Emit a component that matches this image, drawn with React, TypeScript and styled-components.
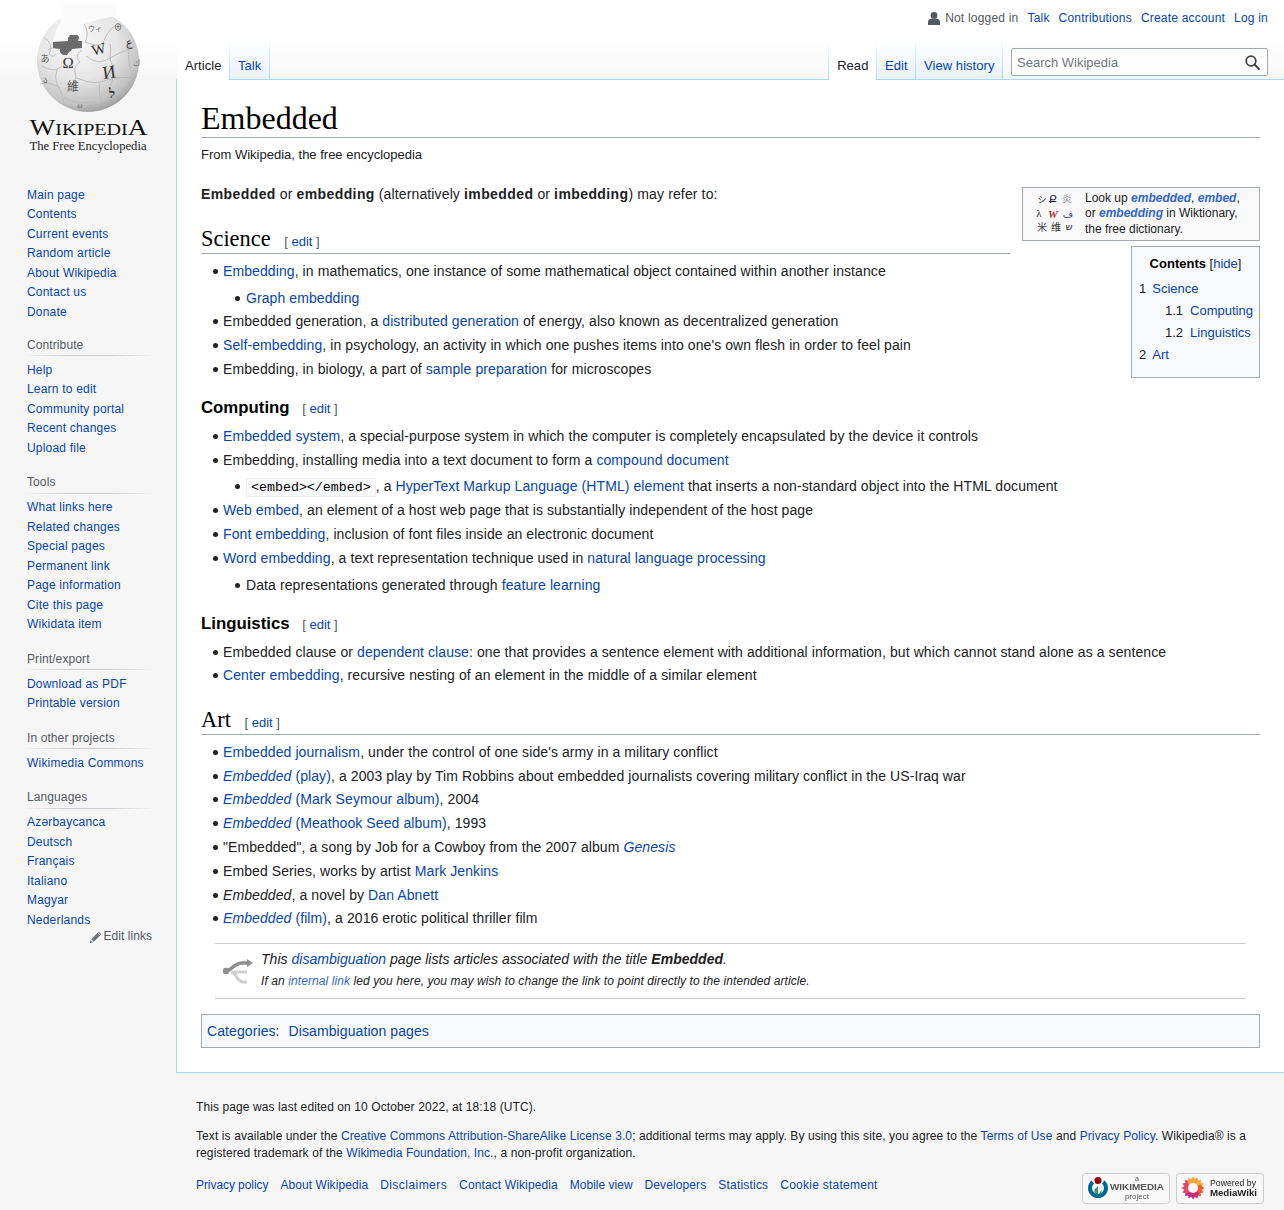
import React from "react";
import styled, { createGlobalStyle } from "styled-components";

const GlobalStyle = createGlobalStyle`
  html, body {
    margin: 0;
    padding: 0;
    font-family: "Liberation Sans", Arial, sans-serif;
    color: #202122;
    background: linear-gradient(#fff 50%, #f6f6f6 100%) 0 0 / 100% 80px no-repeat, #f6f6f6;
  }
  a {
    color: #0645ad;
    text-decoration: none;
  }
`;

const Page = styled.div`
  display: grid;
  grid-template-columns: 176px 1fr;
  width: 1284px;
`;

/* ---------- sidebar ---------- */

const Sidebar = styled.nav`
  display: flex;
  flex-direction: column;
  padding-bottom: 20px;
`;

const LogoBox = styled.a`
  display: block;
  width: 176px;
  height: 185.7px;
`;

const Portal = styled.div<{ $first?: boolean }>`
  margin: 0 24px 0 27px;
  padding-bottom: ${(p) => (p.$first ? "12.8px" : "14px")};
`;

const PortalHeading = styled.h3`
  margin: 0 -3px 4.5px -3px;
  padding: 4px 0 4px 3px;
  font-size: 12px;
  line-height: 13.5px;
  font-weight: 400;
  letter-spacing: 0.1px;
  color: #54595d;
  background: linear-gradient(to right, rgba(200, 204, 209, 0) 0, #c8ccd1 33%, #c8ccd1 66%, rgba(200, 204, 209, 0) 100%) left bottom / 100% 1px no-repeat;
`;

const PortalList = styled.ul`
  list-style: none;
  margin: 0;
  padding: 0;
`;

const PortalItem = styled.li`
  font-size: 12px;
  line-height: 13.5px;
  padding: 3px 0;
  letter-spacing: 0.2px;
  white-space: nowrap;
`;

const EditLinks = styled.div`
  display: flex;
  justify-content: flex-end;
  align-items: center;
  gap: 2px;
  margin: -14px 24px 0 0;
  font-size: 12px;
  line-height: 13.5px;
  letter-spacing: 0.05px;
  color: #54595d;
`;

/* ---------- header ---------- */

const Main = styled.div`
  min-width: 0;
`;

const Header = styled.header`
  height: 79px;
  display: flex;
  flex-direction: column;
`;

const PersonalBar = styled.div`
  height: 40px;
  display: flex;
  justify-content: flex-end;
  align-items: flex-start;
  gap: 9px;
  padding: 12px 16px 0 0;
  box-sizing: border-box;
  font-size: 12px;
  line-height: 13px;
  letter-spacing: 0.2px;
  color: #54595d;
`;

const PersonalName = styled.span`
  display: flex;
  align-items: center;
  gap: 5px;
`;

const TabRow = styled.div`
  flex: 1;
  display: flex;
  justify-content: space-between;
  align-items: stretch;
  padding-left: 1px;
`;

const TabGroup = styled.div`
  display: flex;
  align-items: stretch;
`;

const RightGroup = styled.div`
  display: flex;
  align-items: stretch;
  gap: 8px;
  padding-right: 16px;
`;

const Tab = styled.a<{ $active?: boolean; $leftEdge?: boolean }>`
  display: block;
  position: relative;
  height: ${(p) => (p.$active ? "40px" : "39px")};
  margin-bottom: ${(p) => (p.$active ? "-1px" : "0")};
  padding: 18px 7.5px 0 8px;
  box-sizing: border-box;
  font-size: 13px;
  line-height: 15px;
  letter-spacing: 0.05px;
  color: ${(p) => (p.$active ? "#202122" : "#0645ad")};
  background: ${(p) => (p.$active ? "#fff" : "linear-gradient(to bottom, #fff 0, #e8f2f8 100%)")};
  border-right: 1px solid transparent;
  border-left: ${(p) => (p.$leftEdge ? "1px solid transparent" : "0")};
  border-image: linear-gradient(to bottom, rgba(167, 215, 249, 0) 0, #a7d7f9 100%) 1;
`;

const SearchBox = styled.div`
  width: 257px;
  height: 28px;
  margin-top: 8px;
  box-sizing: border-box;
  display: flex;
  align-items: center;
  justify-content: space-between;
  padding: 0 7px 0 5px;
  border: 1px solid #a2a9b1;
  border-radius: 2px;
  background: rgba(255, 255, 255, 0.7);
  font-size: 13px;
  color: #72777d;
`;

/* ---------- article ---------- */

const Content = styled.main`
  border-top: 1px solid #a7d7f9;
  border-left: 1px solid #a7d7f9;
  border-bottom: 1px solid #a7d7f9;
  background: #fff;
  height: 994px;
  box-sizing: border-box;
  padding: 20px 24px 0 24px;
  font-size: 14px;
  line-height: 22.4px;
`;

const Title = styled.h1`
  margin: 0 0 5.5px;
  font-family: "Liberation Serif", Georgia, serif;
  font-weight: 400;
  font-size: 32px;
  line-height: 37.4px;
  color: #000;
  border-bottom: 1px solid #a2a9b1;
`;

const SiteSub = styled.div`
  font-size: 13px;
  line-height: 22.4px;
  margin-bottom: 17px;
`;

const Para = styled.p`
  margin: 0;
  letter-spacing: 0.13px;

  b {
    letter-spacing: 0.4px;
  }
`;

const WiktBox = styled.div`
  float: right;
  clear: right;
  display: flex;
  align-items: center;
  gap: 8px;
  width: 238px;
  height: 54px;
  box-sizing: border-box;
  margin: 3.7px 0 5px 12px;
  padding: 0 4px 0 12px;
  border: 1px solid #a2a9b1;
  background: #f9f9f9;
  font-size: 12px;
  line-height: 15.3px;

  a {
    color: #36c;
    font-weight: 700;
    font-style: italic;
  }
`;

const WiktLine = styled.div`
  white-space: nowrap;
`;

const Toc = styled.div`
  float: right;
  clear: right;
  width: 129px;
  height: 132px;
  box-sizing: border-box;
  margin: 0 0 8px 12px;
  padding: 7px;
  border: 1px solid #a2a9b1;
  background: #f8f9fa;
  font-size: 13px;
  line-height: 19.5px;
`;

const TocTitle = styled.div`
  text-align: center;
  font-size: 13px;
  margin-bottom: 5px;

  b {
    font-size: 13px;
    color: #000;
  }
`;

const TocRow = styled.div<{ $sub?: boolean }>`
  display: flex;
  gap: ${(p) => (p.$sub ? "7px" : "6px")};
  margin: 0 0 2.8px ${(p) => (p.$sub ? "26px" : "0")};
  white-space: nowrap;
`;

const H2 = styled.h2`
  overflow: hidden;
  margin: 19.6px 0 0;
  font-family: "Liberation Serif", Georgia, serif;
  font-weight: 400;
  font-size: 22.4px;
  line-height: 28px;
  color: #000;
  border-bottom: 1px solid #a2a9b1;
`;

const H3 = styled.h3`
  margin: 15.6px 0 0;
  font-size: 16.8px;
  line-height: 23.5px;
  font-weight: 700;
  color: #000;
`;

const EditSection = styled.span`
  margin-left: 8px;
  font-family: "Liberation Sans", Arial, sans-serif;
  font-size: 13px;
  line-height: 1;
  font-weight: 400;
  color: #54595d;
`;

const Item = styled.li<{ $nested?: boolean }>`
  position: relative;
  margin-bottom: 1.4px;

  &::before {
    content: "";
    position: absolute;
    left: ${(p) => (p.$nested ? "-11px" : "-10px")};
    top: 9px;
    width: 5px;
    height: 5px;
    border-radius: 50%;
    background: #202122;
  }
`;

const List = styled.ul<{ $nested?: boolean }>`
  list-style: none;
  margin: ${(p) => (p.$nested ? "4.3px 0 0 23px" : "5.5px 0 0 22px")};
  padding: 0;
  letter-spacing: 0.09px;
`;

const Code = styled.code`
  font-family: "Liberation Mono", monospace;
  font-size: 13.3px;
  line-height: 1;
  letter-spacing: 0;
  color: #000;
  background: #f8f9fa;
  border: 1px solid #eaecf0;
  border-radius: 2px;
  padding: 1px 4px;
`;

const Disambig = styled.div`
  clear: both;
  display: flex;
  align-items: center;
  gap: 7px;
  margin: 13.2px 14px 0;
  height: 56px;
  box-sizing: border-box;
  padding: 0 7px;
  border-top: 1px solid #ccc;
  border-bottom: 1px solid #ccc;
  font-style: italic;
`;

const DisambigText = styled.div`
  line-height: 22px;
  letter-spacing: 0.03px;
`;

const DisambigSmall = styled.div`
  font-size: 12px;
  line-height: 23px;
  letter-spacing: 0.09px;

  a {
    color: #36c;
  }
`;

const Categories = styled.div`
  margin-top: 15px;
  padding: 5px;
  border: 1px solid #a2a9b1;
  background: #f8f9fa;
  height: 34px;
  box-sizing: border-box;
  display: flex;
  align-items: center;
  gap: 9px;
  letter-spacing: 0.09px;
`;

/* ---------- footer ---------- */

const Footer = styled.footer`
  padding: 26px 20px 0;
  font-size: 12px;
  line-height: 16.8px;
  color: #202122;
`;

const FooterBlock = styled.div`
  margin-bottom: 12.5px;
  letter-spacing: 0.1px;
`;

const FooterBottom = styled.div`
  display: flex;
  justify-content: space-between;
  align-items: flex-start;
  margin-top: -1px;
`;

const FooterLinks = styled.div`
  display: flex;
  gap: 12px;
  padding-top: 4px;
`;

const FooterLink = styled.a<{ $spacing: number }>`
  letter-spacing: ${(p) => p.$spacing}px;
`;

const Badges = styled.div`
  display: flex;
  gap: 6px;
`;

const Badge = styled.a`
  display: block;
  width: 88px;
  height: 31px;
`;

/* ---------- drawings ---------- */

const seams = [
  "M44 38c6 3 8 8 6 14-2 4 4 6 6 2",
  "M84 24c4 6 4 12 1 18 6 2 10 4 18 2 2-8 6-14 12-18",
  "M82 50c-6 4-6 8-2 12-6 4-6 8-4 14-2 6-2 12 0 18",
  "M86 56c8 6 14 8 24 2 8-4 14-8 24-10",
  "M110 44c2 8-2 14 2 20 4 8 2 14-2 22 0 6 0 10-2 16",
  "M42 66c8 4 14 6 20 0",
  "M76 78c8 2 14 6 24 4 8-2 18-6 32-4",
  "M58 68c-4 8-2 16 2 22 2 6 4 10 4 16",
  "M40 84c8-2 14 0 20 4",
  "M130 42c-2 12-2 20 2 32",
  "M62 54c-2-6-8-8-14-4",
  "M100 84c-2 8 0 14 4 22",
  "M64 98c8 4 18 6 30 4",
];

const GlobeLogo = () => (
  <svg width="176" height="177" viewBox="0 0 176 177">
    <defs>
      <radialGradient id="sphere" cx="40%" cy="30%" r="78%">
        <stop offset="0" stopColor="#f8f8f8" />
        <stop offset="0.5" stopColor="#e6e6e6" />
        <stop offset="0.8" stopColor="#c2c2c2" />
        <stop offset="1" stopColor="#8a8a8a" />
      </radialGradient>
    </defs>
    <circle cx="88" cy="61" r="51" fill="url(#sphere)" />
    <g fill="none" stroke="#b9b9b9" strokeWidth="0.9">
      {seams.map((d) => (
        <path key={d} d={d} />
      ))}
    </g>
    <path d="M63 4H116V16L100 19 84 24 82 36 53 42 56 30 61 22 60 18z" fill="#fbfbfb" />
    <path d="M53 42l15-1v-3l2-3h8l1 3-1 3h4v7l-10 1-1 2-2 1-2 3h-4l-3-3v-3l-7-1z" fill="#6b6b6b" />
    <g fontFamily="'Liberation Serif', 'Noto Sans CJK SC', serif" fill="#333" textAnchor="middle">
      <text x="68" y="68" fontSize="15">Ω</text>
      <text x="100" y="54" fontSize="15" transform="rotate(-14 100 54)">W</text>
      <text x="110" y="78" fontSize="18" transform="rotate(-8 110 78)">И</text>
      <text x="73" y="91" fontSize="12" fill="#555" fontFamily="'Noto Sans CJK TC', sans-serif">維</text>
      <text x="112" y="98" fontSize="13" fontWeight="700">ל</text>
      <text x="129" y="46" fontSize="11">ع</text>
      <text x="45" y="62" fontSize="9" fill="#555" fontFamily="'Noto Sans CJK JP', sans-serif">あ</text>
      <text x="45" y="83" fontSize="9" fill="#666">ა</text>
      <text x="136" y="66" fontSize="9" fill="#777">ك</text>
      <text x="118" y="30" fontSize="8" fill="#444">⊕</text>
      <text x="95" y="31" fontSize="7" fill="#555" fontFamily="'Noto Sans CJK JP', sans-serif">ウィ</text>
      <text x="80" y="108" fontSize="8" fill="#666">ω</text>
    </g>
    <g fontFamily="'Liberation Serif', serif" fill="#111" textAnchor="middle">
      <text x="88.5" y="135" fontSize="16.5" textLength="118" lengthAdjust="spacingAndGlyphs">
        <tspan fontSize="22.5">W</tspan>IKIPEDI<tspan fontSize="22.5">A</tspan>
      </text>
      <text x="88" y="150" fontSize="12.6" textLength="117" lengthAdjust="spacingAndGlyphs" fill="#222">
        The Free Encyclopedia
      </text>
    </g>
  </svg>
);

const UserGlyph = () => (
  <svg width="12" height="13" viewBox="0 0 12 13" fill="#54595d">
    <circle cx="6" cy="3.4" r="3.4" />
    <path d="M0 13V10c0-2 2-3.200 3.400-3.200h5.200C10 6.800 12 8 12 10v3z" />
  </svg>
);

const PencilGlyph = () => (
  <svg width="11" height="11" viewBox="0 0 11 11" fill="#72777d">
    <path d="M0 11l.6-3 2.400 2.400zM1.200 7.200L7.600.8l2.600 2.600-6.400 6.400zM8.200.2c.3-.3.8-.3 1.100 0l1.500 1.500c.3.3.3.8 0 1.100l-.1.100L8.100.4z" />
  </svg>
);

const LensGlyph = () => (
  <svg width="15" height="15" viewBox="0 0 15 15" fill="none" stroke="#404244" strokeWidth="1.800">
    <circle cx="6" cy="6" r="4.800" />
    <path d="M9.500 9.500l4.500 4.500" strokeLinecap="round" />
  </svg>
);

const WiktLogo = () => (
  <svg width="42" height="50" viewBox="0 -4 42 50" style={{ flexShrink: 0 }}>
    <g fontFamily="'Noto Sans CJK SC', 'Liberation Serif', serif" fontSize="10" fill="#223" textAnchor="middle">
      <text x="7" y="10" fontSize="9">シ</text>
      <text x="18" y="10" fontSize="11" fontFamily="'DejaVu Sans', sans-serif">Ք</text>
      <text x="32" y="10" fill="#889">炎</text>
      <text x="4" y="24" fontSize="11" fontFamily="'Liberation Serif', serif">λ</text>
      <text x="18" y="25" fontSize="11" fill="#a33" fontStyle="italic" fontWeight="700" fontFamily="'Liberation Serif', serif">W</text>
      <text x="33" y="24" fontSize="10" fill="#557" fontFamily="'DejaVu Sans', sans-serif">ف</text>
      <text x="7" y="38" fill="#445">米</text>
      <text x="21" y="38" fill="#333">维</text>
      <text x="34" y="37" fontSize="10" fontFamily="'DejaVu Sans', sans-serif">ש</text>
    </g>
  </svg>
);

const DisambigIcon = () => (
  <svg width="32" height="26" viewBox="0 0 32 26" style={{ flexShrink: 0 }}>
    <path d="M12 14H25M9 14C14 14 15 24 21 24H25" fill="none" stroke="#cfcfcf" strokeWidth="3" />
    <path d="M3 13C10 13 12 5 20 5H26" fill="none" stroke="#8f8f8f" strokeWidth="3.500" />
    <path d="M25 1l6 4-6 4z" fill="#8f8f8f" />
    <circle cx="4" cy="13" r="3.200" fill="#8f8f8f" />
  </svg>
);

const BadgeFrame = styled.svg`
  display: block;
  filter: blur(0.3px);
`;

const BadgeBack = () => <rect x="0.5" y="0.5" width="87" height="30" rx="3" fill="#f8f8f8" stroke="#c8ccd1" />;

const WikimediaBadge = () => (
  <BadgeFrame width="88" height="31" viewBox="0 0 88 31">
    <BadgeBack />
    <circle cx="16" cy="7.500" r="3.500" fill="#990000" />
    <path d="M9.500 7.500a10 10 0 1 0 13 0l-2.500 3a6 6 0 1 1-8 0z" fill="#006699" />
    <path d="M16 23v-10l-3.500 3.500v4a8 8 0 0 0 7 0v-4z" fill="#339966" />
    <g fontFamily="'Liberation Sans', sans-serif" textAnchor="middle" fill="#555">
      <text x="55" y="8" fontSize="7">a</text>
      <text x="55" y="17" fontSize="8.500" fontWeight="700" textLength="54" lengthAdjust="spacingAndGlyphs">WIKIMEDIA</text>
      <text x="55" y="25.500" fontSize="8">project</text>
    </g>
  </BadgeFrame>
);

const petals = Array.from({ length: 16 }, (_, i) => i * 22.5);

const petalColor = (angle: number) => {
  if (angle < 70 || angle >= 320) return "#f8a53c";
  if (angle < 140) return "#f0592b";
  if (angle < 230) return "#c42f7f";
  return "#e2476a";
};

const MediaWikiBadge = () => (
  <BadgeFrame width="88" height="31" viewBox="0 0 88 31">
    <BadgeBack />
    <g transform="translate(17 15)">
      {petals.map((a) => (
        <path key={a} d="M-3-7L0-11.500 3-7 2-4H-2z" fill={petalColor(a)} transform={`rotate(${a})`} />
      ))}
      <circle r="5" fill="#f8f8f8" />
    </g>
    <g fontFamily="'Liberation Sans', sans-serif" fill="#222">
      <text x="34" y="13" fontSize="9.500" textLength="46" lengthAdjust="spacingAndGlyphs">Powered by</text>
      <text x="34" y="23" fontSize="9.500" fontWeight="700" textLength="47" lengthAdjust="spacingAndGlyphs">MediaWiki</text>
    </g>
  </BadgeFrame>
);

/* ---------- data ---------- */

const portals = [
  { title: "Contribute", items: ["Help", "Learn to edit", "Community portal", "Recent changes", "Upload file"] },
  { title: "Tools", items: ["What links here", "Related changes", "Special pages", "Permanent link", "Page information", "Cite this page", "Wikidata item"] },
  { title: "Print/export", items: ["Download as PDF", "Printable version"] },
  { title: "In other projects", items: ["Wikimedia Commons"] },
  { title: "Languages", items: ["Azərbaycanca", "Deutsch", "Français", "Italiano", "Magyar", "Nederlands"] },
];

const mainLinks = ["Main page", "Contents", "Current events", "Random article", "About Wikipedia", "Contact us", "Donate"];

const footerLinks = [
  { label: "Privacy policy", spacing: -0.07 },
  { label: "About Wikipedia", spacing: 0.07 },
  { label: "Disclaimers", spacing: 0.45 },
  { label: "Contact Wikipedia", spacing: 0.12 },
  { label: "Mobile view", spacing: 0 },
  { label: "Developers", spacing: 0.1 },
  { label: "Statistics", spacing: 0.2 },
  { label: "Cookie statement", spacing: 0.25 },
];

const Edit = () => (
  <EditSection>
    [ <a href="#">edit</a> ]
  </EditSection>
);

export default function App() {
  return (
    <>
      <GlobalStyle />
      <Page>
        <Sidebar>
          <LogoBox href="#">
            <GlobeLogo />
          </LogoBox>
          <Portal $first>
            <PortalList>
              {mainLinks.map((l) => (
                <PortalItem key={l}>
                  <a href="#">{l}</a>
                </PortalItem>
              ))}
            </PortalList>
          </Portal>
          {portals.map((p) => (
            <Portal key={p.title}>
              <PortalHeading>{p.title}</PortalHeading>
              <PortalList>
                {p.items.map((l) => (
                  <PortalItem key={l}>
                    <a href="#">{l}</a>
                  </PortalItem>
                ))}
              </PortalList>
            </Portal>
          ))}
          <EditLinks>
            <PencilGlyph /> Edit links
          </EditLinks>
        </Sidebar>

        <Main>
          <Header>
            <PersonalBar>
              <PersonalName>
                <UserGlyph /> Not logged in
              </PersonalName>
              <a href="#">Talk</a>
              <a href="#">Contributions</a>
              <a href="#">Create account</a>
              <a href="#">Log in</a>
            </PersonalBar>
            <TabRow>
              <TabGroup>
                <Tab $active>Article</Tab>
                <Tab href="#">Talk</Tab>
              </TabGroup>
              <RightGroup>
                <TabGroup>
                  <Tab $active $leftEdge>Read</Tab>
                  <Tab href="#">Edit</Tab>
                  <Tab href="#">View history</Tab>
                </TabGroup>
                <SearchBox>
                  Search Wikipedia
                  <LensGlyph />
                </SearchBox>
              </RightGroup>
            </TabRow>
          </Header>

          <Content>
            <Title>Embedded</Title>
            <SiteSub>From Wikipedia, the free encyclopedia</SiteSub>
            <WiktBox>
              <WiktLogo />
              <div>
                <WiktLine>Look up <a href="#">embedded</a>, <a href="#">embed</a>,</WiktLine>
                <WiktLine>or <a href="#">embedding</a> in Wiktionary,</WiktLine>
                <WiktLine>the free dictionary.</WiktLine>
              </div>
            </WiktBox>
            <Para>
              <b>Embedded</b> or <b>embedding</b> (alternatively <b>imbedded</b> or <b>imbedding</b>) may refer to:
            </Para>
            <Toc>
              <TocTitle>
                <b>Contents</b> [<a href="#">hide</a>]
              </TocTitle>
              <TocRow>1 <a href="#">Science</a></TocRow>
              <TocRow $sub>1.1 <a href="#">Computing</a></TocRow>
              <TocRow $sub>1.2 <a href="#">Linguistics</a></TocRow>
              <TocRow>2 <a href="#">Art</a></TocRow>
            </Toc>
            <H2>Science <Edit /></H2>
            <List>
              <Item>
                <a href="#">Embedding</a>, in mathematics, one instance of some mathematical object contained within another instance
                <List $nested>
                  <Item $nested><a href="#">Graph embedding</a></Item>
                </List>
              </Item>
              <Item>Embedded generation, a <a href="#">distributed generation</a> of energy, also known as decentralized generation</Item>
              <Item><a href="#">Self-embedding</a>, in psychology, an activity in which one pushes items into one's own flesh in order to feel pain</Item>
              <Item>Embedding, in biology, a part of <a href="#">sample preparation</a> for microscopes</Item>
            </List>
            <H3>Computing <Edit /></H3>
            <List>
              <Item><a href="#">Embedded system</a>, a special-purpose system in which the computer is completely encapsulated by the device it controls</Item>
              <Item>
                Embedding, installing media into a text document to form a <a href="#">compound document</a>
                <List $nested>
                  <Item $nested><Code>&lt;embed&gt;&lt;/embed&gt;</Code>, a <a href="#">HyperText Markup Language (HTML) element</a> that inserts a non-standard object into the HTML document</Item>
                </List>
              </Item>
              <Item><a href="#">Web embed</a>, an element of a host web page that is substantially independent of the host page</Item>
              <Item><a href="#">Font embedding</a>, inclusion of font files inside an electronic document</Item>
              <Item>
                <a href="#">Word embedding</a>, a text representation technique used in <a href="#">natural language processing</a>
                <List $nested>
                  <Item $nested>Data representations generated through <a href="#">feature learning</a></Item>
                </List>
              </Item>
            </List>
            <H3>Linguistics <Edit /></H3>
            <List>
              <Item>Embedded clause or <a href="#">dependent clause</a>: one that provides a sentence element with additional information, but which cannot stand alone as a sentence</Item>
              <Item><a href="#">Center embedding</a>, recursive nesting of an element in the middle of a similar element</Item>
            </List>
            <H2>Art <Edit /></H2>
            <List>
              <Item><a href="#">Embedded journalism</a>, under the control of one side's army in a military conflict</Item>
              <Item><a href="#"><i>Embedded</i> (play)</a>, a 2003 play by Tim Robbins about embedded journalists covering military conflict in the US-Iraq war</Item>
              <Item><a href="#"><i>Embedded</i> (Mark Seymour album)</a>, 2004</Item>
              <Item><a href="#"><i>Embedded</i> (Meathook Seed album)</a>, 1993</Item>
              <Item>"Embedded", a song by Job for a Cowboy from the 2007 album <a href="#"><i>Genesis</i></a></Item>
              <Item>Embed Series, works by artist <a href="#">Mark Jenkins</a></Item>
              <Item><i>Embedded</i>, a novel by <a href="#">Dan Abnett</a></Item>
              <Item><a href="#"><i>Embedded</i> (film)</a>, a 2016 erotic political thriller film</Item>
            </List>
            <Disambig>
              <DisambigIcon />
              <div>
                <DisambigText>
                  This <a href="#">disambiguation</a> page lists articles associated with the title <b>Embedded</b>.
                </DisambigText>
                <DisambigSmall>
                  If an <a href="#">internal link</a> led you here, you may wish to change the link to point directly to the intended article.
                </DisambigSmall>
              </div>
            </Disambig>
            <Categories>
              <span><a href="#">Categories</a>:</span>
              <a href="#">Disambiguation pages</a>
            </Categories>
          </Content>

          <Footer>
            <FooterBlock>This page was last edited on 10 October 2022, at 18:18 (UTC).</FooterBlock>
            <FooterBlock>
              <div>
                Text is available under the <a href="#">Creative Commons Attribution-ShareAlike License 3.0</a>; additional terms may apply. By using this site, you agree to the <a href="#">Terms of Use</a> and <a href="#">Privacy Policy</a>. Wikipedia® is a
              </div>
              <div>
                registered trademark of the <a href="#">Wikimedia Foundation, Inc.</a>, a non-profit organization.
              </div>
            </FooterBlock>
            <FooterBottom>
              <FooterLinks>
                {footerLinks.map((l) => (
                  <FooterLink key={l.label} href="#" $spacing={l.spacing}>{l.label}</FooterLink>
                ))}
              </FooterLinks>
              <Badges>
                <Badge href="#"><WikimediaBadge /></Badge>
                <Badge href="#"><MediaWikiBadge /></Badge>
              </Badges>
            </FooterBottom>
          </Footer>
        </Main>
      </Page>
    </>
  );
}
